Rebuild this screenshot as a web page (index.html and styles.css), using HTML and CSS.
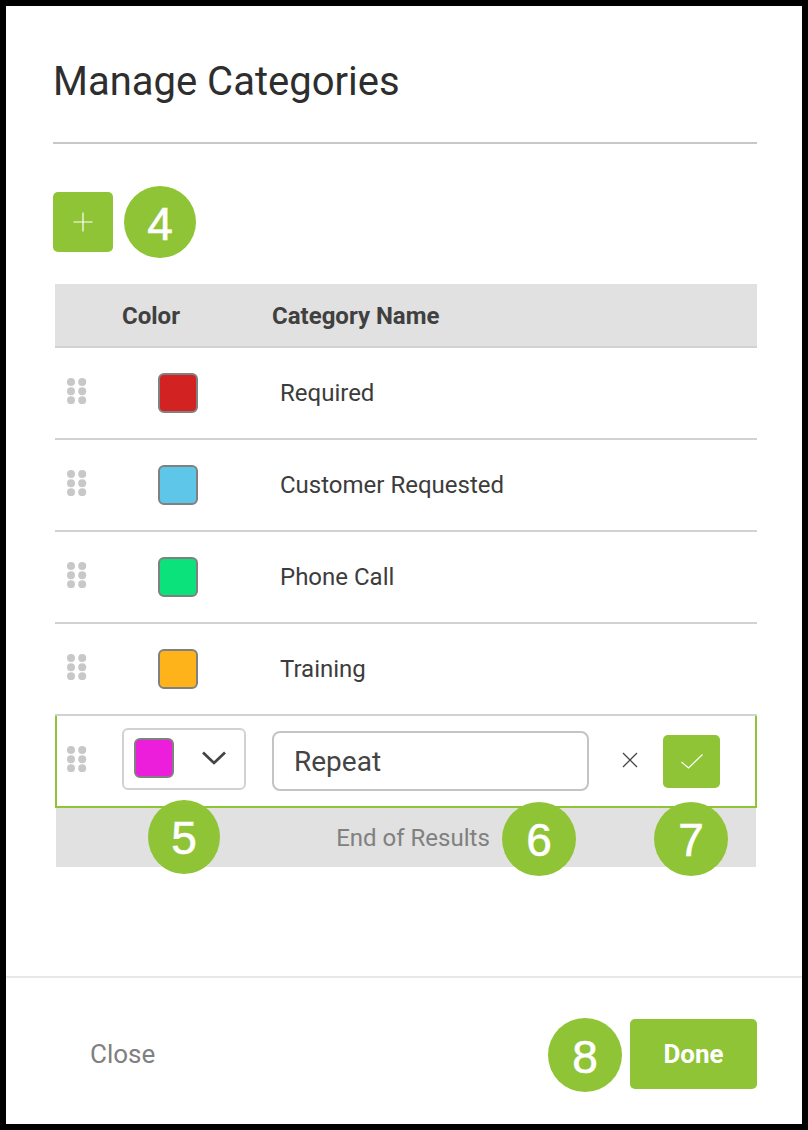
FILE: index.html
```html
<!DOCTYPE html>
<html lang="en">
<head>
<meta charset="utf-8">
<title>Manage Categories</title>
<link rel="stylesheet" href="styles.css">
</head>
<body>
<svg class="defs" width="0" height="0" aria-hidden="true">
  <symbol id="grip" viewBox="0 0 20 26">
    <g fill="#c8c8c8">
      <circle cx="4" cy="4" r="4"/><circle cx="15.2" cy="4" r="4"/>
      <circle cx="4" cy="13.2" r="4"/><circle cx="15.2" cy="13.2" r="4"/>
      <circle cx="4" cy="22.2" r="4"/><circle cx="15.2" cy="22.2" r="4"/>
    </g>
  </symbol>
</svg>
<main class="modal">
  <header class="modal-head">
    <h1 class="title">Manage Categories</h1>
  </header>
  <section class="modal-body">
    <div class="toolbar">
      <button class="btn-add" aria-label="Add">
        <svg width="20" height="20" viewBox="0 0 20 20"><path d="M10 0.5V19.5M0.5 10H19.5" stroke="#fff" stroke-width="1.2" fill="none"/></svg>
      </button>
      <span class="badge">4</span>
    </div>
    <div class="table">
      <div class="row row-head">
        <div></div>
        <div class="th">Color</div>
        <div class="th">Category Name</div>
      </div>
      <div class="row row-item">
        <svg class="grip"><use href="#grip"/></svg>
        <span class="swatch swatch-red"></span>
        <span class="name">Required</span>
      </div>
      <div class="row row-item">
        <svg class="grip"><use href="#grip"/></svg>
        <span class="swatch swatch-blue"></span>
        <span class="name">Customer Requested</span>
      </div>
      <div class="row row-item">
        <svg class="grip"><use href="#grip"/></svg>
        <span class="swatch swatch-green"></span>
        <span class="name">Phone Call</span>
      </div>
      <div class="row row-item">
        <svg class="grip"><use href="#grip"/></svg>
        <span class="swatch swatch-orange"></span>
        <span class="name">Training</span>
      </div>
      <div class="row row-edit">
        <svg class="grip"><use href="#grip"/></svg>
        <div class="color-select">
          <span class="swatch swatch-pink"></span>
          <svg class="chevron" width="26" height="16" viewBox="0 0 26 16"><path d="M2 2.5L13 13L24 2.5" stroke="#444" stroke-width="2.7" fill="none"/></svg>
        </div>
        <div class="name-input">Repeat</div>
        <svg class="icon-x" width="16" height="16" viewBox="0 0 16 16"><path d="M1 1L15 15M15 1L1 15" stroke="#444" stroke-width="1.3" fill="none"/></svg>
        <button class="btn-check" aria-label="Save">
          <svg width="22" height="15" viewBox="0 0 22 15"><path d="M0.5 8L7.5 14L21.5 0.5" stroke="#fff" stroke-width="1.2" fill="none"/></svg>
        </button>
      </div>
      <div class="end-row">
        End of Results
        <span class="badge badge-over badge-5">5</span>
        <span class="badge badge-over badge-6">6</span>
        <span class="badge badge-over badge-7">7</span>
      </div>
    </div>
  </section>
  <footer class="modal-foot">
    <button class="btn-close">Close</button>
    <div class="foot-actions">
      <span class="badge badge-8">8</span>
      <button class="btn-done">Done</button>
    </div>
  </footer>
</main>
</body>
</html>
```
FILE: styles.css
```css
* { box-sizing: border-box; }
html, body { margin: 0; height: 1130px; }
body {
  background: #000;
  padding: 6px;
  font-family: Roboto, "Liberation Sans", sans-serif;
  overflow: hidden;
}
.defs { position: absolute; }
button { font-family: inherit; border: 0; padding: 0; cursor: pointer; }
.modal {
  width: 796px;
  height: 1118px;
  background: #fff;
  display: flex;
  flex-direction: column;
}
.modal-head {
  margin: 0 45px 0 47px;
  height: 138px;
  border-bottom: 2px solid #c8c8c8;
  padding-top: 53px;
}
.title {
  margin: 0;
  font-size: 40px;
  line-height: 46px;
  font-weight: 400;
  color: #2e2e2e;
}
.modal-body {
  margin: 0 45px 0 47px;
  padding-top: 42px;
}
.toolbar {
  display: flex;
  align-items: center;
  gap: 11px;
  height: 72px;
}
.btn-add {
  width: 60px;
  height: 60px;
  border-radius: 5px;
  background: #8fc436;
  display: flex;
  align-items: center;
  justify-content: center;
}
.badge {
  width: 72px;
  height: 72px;
  border-radius: 50%;
  background: #8fc436;
  color: #fff;
  font-family: "Liberation Sans", Roboto, sans-serif;
  font-size: 46px;
  -webkit-text-stroke: 0.6px #fff;
  padding-top: 3px;
  display: flex;
  align-items: center;
  justify-content: center;
  flex: none;
}
.table { margin: 26px 0 0 2px; }
.row {
  display: grid;
  grid-template-columns: 67px 150px 1fr;
  align-items: center;
}
.row-head {
  height: 64px;
  background: #e1e1e1;
  border-bottom: 2px solid #d2d2d2;
}
.th {
  font-size: 24px;
  font-weight: 700;
  color: #404040;
  padding-top: 2px;
}
.row-item {
  height: 92px;
  border-bottom: 2px solid #d2d2d2;
}
.grip {
  width: 20px;
  height: 26px;
  margin: 0 0 4px 12px;
}
.swatch {
  display: block;
  width: 40px;
  height: 40px;
  border: 2px solid #808080;
  border-radius: 6px;
}
.row-item .swatch { margin-left: 36px; }
.swatch-red { background: #d32222; }
.swatch-blue { background: #5ec6e8; }
.swatch-green { background: #0ce27c; }
.swatch-orange { background: #ffb31a; }
.swatch-pink { background: #ec1ddb; margin-bottom: 2px; }
.name {
  font-size: 24px;
  color: #3c3c3c;
  padding-left: 8px;
}
.row-edit {
  height: 92px;
  grid-template-columns: 65px 150px 317px 74px 57px;
  border: solid #8fc436;
  border-width: 0 2px 2px;
}
.row-edit .grip { margin-left: 10px; }
.color-select {
  width: 124px;
  height: 62px;
  margin-bottom: 4px;
  border: 2px solid #d2d2d2;
  border-radius: 6px;
  display: flex;
  align-items: center;
  justify-content: space-between;
  padding: 0 17px 0 10px;
}
.chevron { margin-bottom: 2px; }
.name-input {
  height: 60px;
  border: 2px solid #c4c4c4;
  border-radius: 8px;
  font-size: 28px;
  line-height: 57px;
  color: #444;
  padding-left: 20px;
}
.icon-x { margin: 0 0 2px 33px; }
.btn-check {
  width: 57px;
  height: 53px;
  border-radius: 5px;
  background: #8fc436;
  display: flex;
  align-items: center;
  justify-content: center;
}
.end-row {
  position: relative;
  height: 59px;
  margin: 0 1px;
  background: #e1e1e1;
  color: #808080;
  font-size: 24px;
  line-height: 61px;
  text-align: center;
  padding-left: 14px;
}
.badge-over { position: absolute; width: 74px; height: 74px; top: -6px; }
.badge-5 { left: 92px; top: -8px; width: 72px; }
.badge-6 { left: 446px; }
.badge-7 { left: 598px; }
.modal-foot {
  margin-top: auto;
  height: 148px;
  border-top: 2px solid #e8e8e8;
  display: flex;
  justify-content: space-between;
  align-items: center;
  padding: 6px 45px 0 47px;
}
.btn-close {
  background: none;
  color: #808080;
  font-size: 26px;
  padding-left: 37px;
}
.foot-actions {
  display: flex;
  align-items: center;
  gap: 8px;
}
.badge-8 { width: 74px; height: 74px; margin-top: 2px; }
.btn-done {
  width: 127px;
  height: 70px;
  border-radius: 5px;
  background: #8fc436;
  color: #fff;
  font-size: 26px;
  font-weight: 700;
}
```
